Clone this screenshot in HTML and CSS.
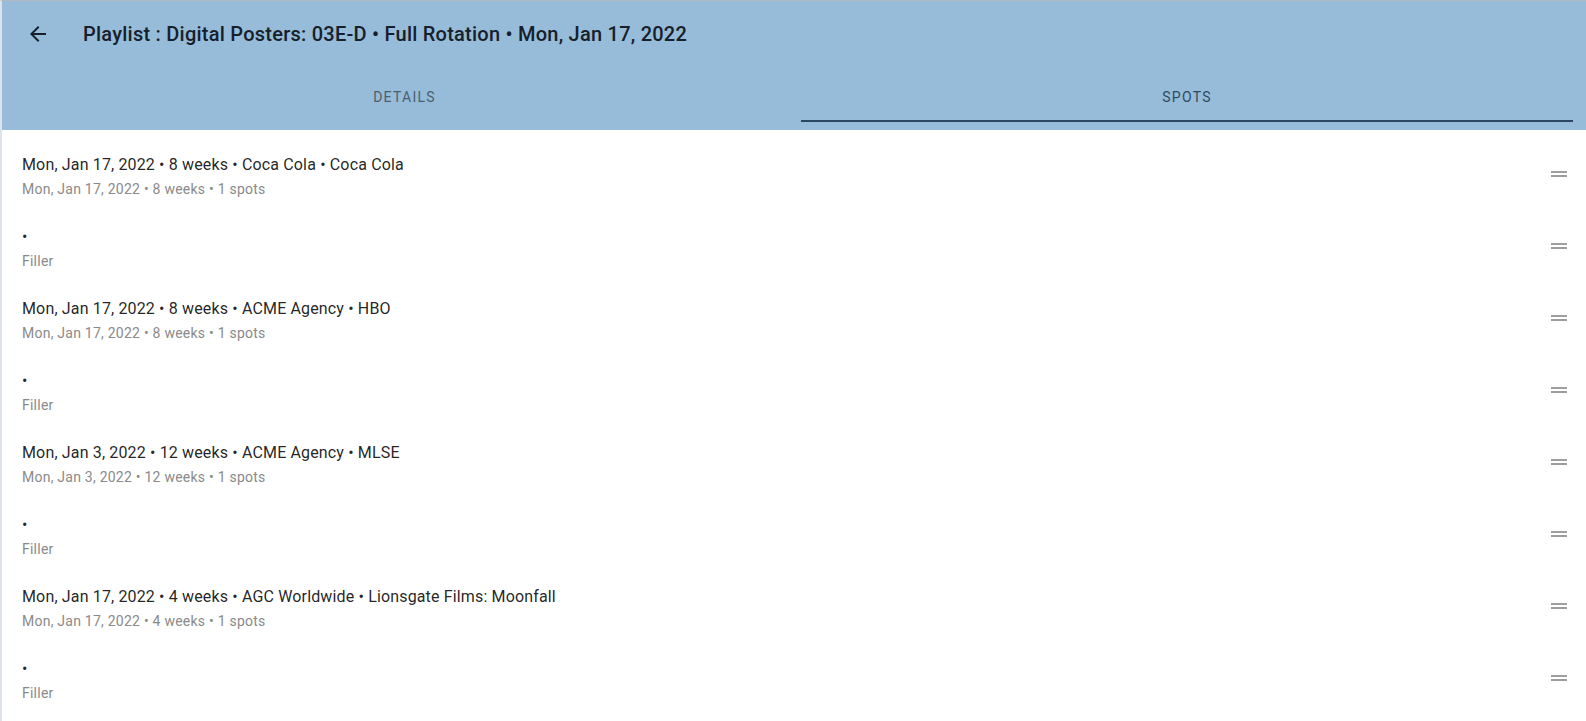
FILE: index.html
```html
<!DOCTYPE html>
<html lang="en">
<head>
    <meta charset="UTF-8">
    <meta name="viewport" content="width=device-width, initial-scale=1.0">
    <title>Playlist</title>
    <link rel="stylesheet" href="styles.css">
</head>
<body>
    <div class="app">
        <header class="appbar">
            <div class="toolbar">
                <button class="back" aria-label="back">
                    <svg viewBox="0 0 24 24" width="24" height="24"><path d="M20 11H7.83l5.59-5.59L12 4l-8 8 8 8 1.41-1.41L7.83 13H20v-2z"/></svg>
                </button>
                <h1 class="title">Playlist : Digital Posters: 03E-D • Full Rotation • Mon, Jan 17, 2022</h1>
            </div>
            <nav class="tabs">
                <div class="tab">Details</div>
                <div class="tab active">Spots</div>
            </nav>
        </header>

        <ul class="list">
            <li class="item">
                <div class="text">
                    <span class="primary">Mon, Jan 17, 2022 • 8 weeks • Coca Cola • Coca Cola</span>
                    <span class="secondary">Mon, Jan 17, 2022 • 8 weeks • 1 spots</span>
                </div>
                <svg class="handle" viewBox="0 0 24 24" width="24" height="24"><path d="M20 9H4v2h16V9zM4 15h16v-2H4v2z"/></svg>
            </li>
            <li class="item">
                <div class="text">
                    <span class="primary">•</span>
                    <span class="secondary">Filler</span>
                </div>
                <svg class="handle" viewBox="0 0 24 24" width="24" height="24"><path d="M20 9H4v2h16V9zM4 15h16v-2H4v2z"/></svg>
            </li>
            <li class="item">
                <div class="text">
                    <span class="primary">Mon, Jan 17, 2022 • 8 weeks • ACME Agency • HBO</span>
                    <span class="secondary">Mon, Jan 17, 2022 • 8 weeks • 1 spots</span>
                </div>
                <svg class="handle" viewBox="0 0 24 24" width="24" height="24"><path d="M20 9H4v2h16V9zM4 15h16v-2H4v2z"/></svg>
            </li>
            <li class="item">
                <div class="text">
                    <span class="primary">•</span>
                    <span class="secondary">Filler</span>
                </div>
                <svg class="handle" viewBox="0 0 24 24" width="24" height="24"><path d="M20 9H4v2h16V9zM4 15h16v-2H4v2z"/></svg>
            </li>
            <li class="item">
                <div class="text">
                    <span class="primary">Mon, Jan 3, 2022 • 12 weeks • ACME Agency • MLSE</span>
                    <span class="secondary">Mon, Jan 3, 2022 • 12 weeks • 1 spots</span>
                </div>
                <svg class="handle" viewBox="0 0 24 24" width="24" height="24"><path d="M20 9H4v2h16V9zM4 15h16v-2H4v2z"/></svg>
            </li>
            <li class="item">
                <div class="text">
                    <span class="primary">•</span>
                    <span class="secondary">Filler</span>
                </div>
                <svg class="handle" viewBox="0 0 24 24" width="24" height="24"><path d="M20 9H4v2h16V9zM4 15h16v-2H4v2z"/></svg>
            </li>
            <li class="item">
                <div class="text">
                    <span class="primary">Mon, Jan 17, 2022 • 4 weeks • AGC Worldwide • Lionsgate Films: Moonfall</span>
                    <span class="secondary">Mon, Jan 17, 2022 • 4 weeks • 1 spots</span>
                </div>
                <svg class="handle" viewBox="0 0 24 24" width="24" height="24"><path d="M20 9H4v2h16V9zM4 15h16v-2H4v2z"/></svg>
            </li>
            <li class="item">
                <div class="text">
                    <span class="primary">•</span>
                    <span class="secondary">Filler</span>
                </div>
                <svg class="handle" viewBox="0 0 24 24" width="24" height="24"><path d="M20 9H4v2h16V9zM4 15h16v-2H4v2z"/></svg>
            </li>
        </ul>
    </div>
</body>
</html>
```

FILE: styles.css
```css
:root {
    --color-header: #97bcd9;
    --color-indicator: #2b4760;
    --color-text: rgba(0, 0, 0, 0.87);
    --color-muted: #8a8a8a;
    --color-icon: #9e9e9e;
}
html, body {
    margin: 0;
    height: 100%;
    overflow: hidden;
}
body {
    font-family: Roboto, 'Liberation Sans', sans-serif;
    color: var(--color-text);
    background: #ffffff;
}
.app {
    border-top: 1px solid #b4b8bc;
    border-left: 2px solid #dde3e8;
    min-height: 100%;
}
.appbar {
    background-color: var(--color-header);
    padding-bottom: 8px;
}
.toolbar {
    display: flex;
    align-items: center;
    height: 66px;
    padding-left: 14px;
}
.back {
    display: flex;
    padding: 10px;
    border: none;
    background: none;
    cursor: pointer;
    fill: #16202a;
}
.title {
    margin: 0 0 0 23px;
    font-size: 20px;
    font-weight: 500;
    letter-spacing: 0.012em;
    color: #16202a;
}
.tabs {
    display: grid;
    grid-template-columns: 793px 1fr;
    margin-top: 7px;
    padding: 0 13px 0 6px;
}
.tab {
    height: 46px;
    display: flex;
    align-items: center;
    justify-content: center;
    text-transform: uppercase;
    font-size: 14px;
    font-weight: 400;
    letter-spacing: 0.09em;
    color: #4c5f6e;
    border-bottom: 2px solid transparent;
    cursor: pointer;
}
.tab.active {
    color: #2e4a62;
    border-bottom-color: var(--color-indicator);
}
.list {
    list-style: none;
    margin: 0;
    padding: 8px 0;
}
.item {
    display: flex;
    align-items: flex-start;
    height: 72px;
    padding: 15px 15px 0 20px;
    box-sizing: border-box;
}
.text {
    flex: 1;
    display: flex;
    flex-direction: column;
}
.primary {
    font-size: 16px;
    line-height: 24px;
    letter-spacing: 0.00938em;
}
.secondary {
    margin-top: 1px;
    font-size: 14px;
    line-height: 22px;
    letter-spacing: 0.017em;
    color: var(--color-muted);
}
.handle {
    margin-top: 9px;
    fill: var(--color-icon);
}
```
